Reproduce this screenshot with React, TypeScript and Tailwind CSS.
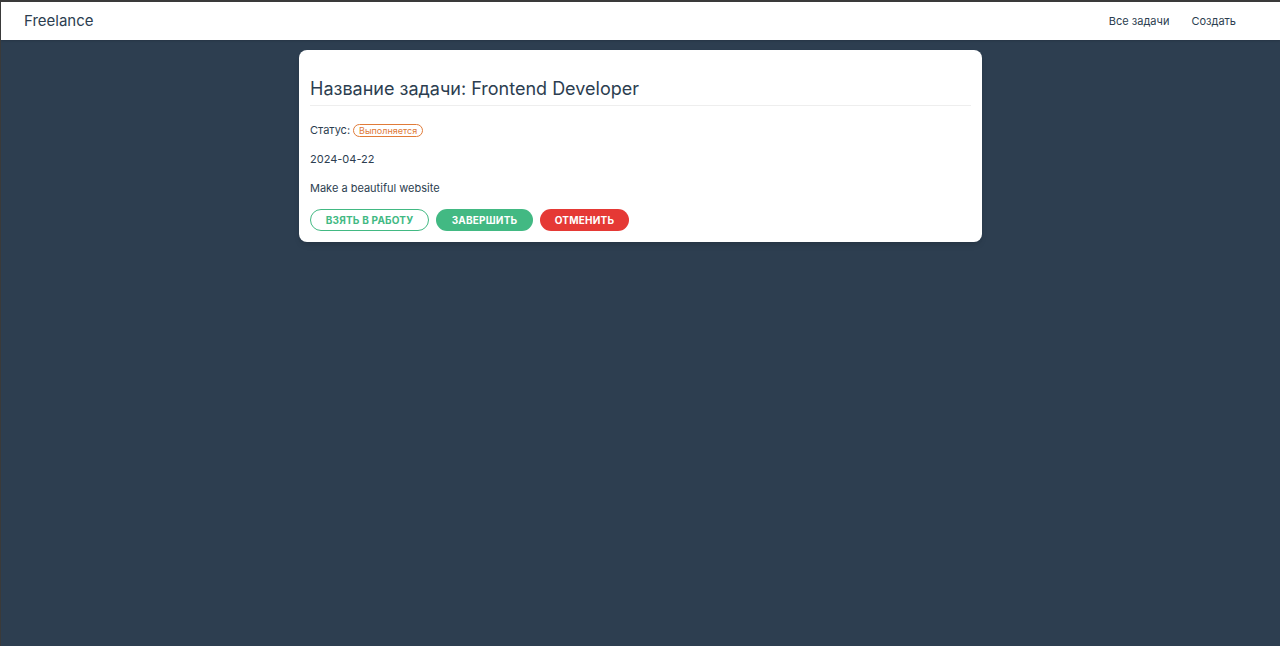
import React from "react";

function NavBar() {
  return (
    <header className="flex h-[38px] items-center justify-between bg-white pl-[23px] pr-[44px] shadow-[0_1px_2px_rgba(0,0,0,0.15)]">
      <a className="pt-[1px] text-[15px] text-[#2c3e50]">Freelance</a>
      <nav className="flex items-center gap-[22px] pt-[1px] text-[11px] text-[#2c3e50]">
        <a>Все задачи</a>
        <a>Создать</a>
      </nav>
    </header>
  );
}

function TaskCard() {
  return (
    <div className="mx-auto mt-[10px] w-[683px] rounded-lg bg-white px-[11px] pb-[11px] pt-[27px] text-[#2c3e50] shadow-md">
      <h2 className="border-b border-[#eeeeee] pb-[4px] text-[18px] leading-6">
        Название задачи: Frontend Developer
      </h2>
      <div className="mt-[15px] flex items-center gap-[3px] text-[11px] leading-[18px]">
        <span>Статус:</span>
        <span className="rounded-full border border-[#e07b39] px-[5px] text-[9px] leading-[11px] text-[#e07b39]">
          Выполняется
        </span>
      </div>
      <p className="mt-[11px] text-[11px] leading-[18px]">2024-04-22</p>
      <p className="mt-[11px] text-[11px] leading-[18px]">Make a beautiful website</p>
      <div className="mt-[12px] flex gap-[7px]">
        <button className="h-[22px] w-[119px] rounded-full border border-[#42b983] bg-white text-[10px] font-bold tracking-[0.02em] text-[#42b983]">
          ВЗЯТЬ В РАБОТУ
        </button>
        <button className="h-[22px] w-[97px] rounded-full bg-[#42b983] text-[10px] font-bold tracking-[0.02em] text-white">
          ЗАВЕРШИТЬ
        </button>
        <button className="h-[22px] w-[89px] rounded-full bg-[#e53935] text-[10px] font-bold tracking-[0.02em] text-white">
          ОТМЕНИТЬ
        </button>
      </div>
    </div>
  );
}

export default function App() {
  return (
    <div
      className="flex h-[646px] flex-col overflow-hidden border-l border-t-2 border-[#3a3a3a] bg-[#2d3e50]"
      style={{ fontFamily: "Inter, 'Noto Sans', sans-serif" }}
    >
      <NavBar />
      <TaskCard />
    </div>
  );
}
